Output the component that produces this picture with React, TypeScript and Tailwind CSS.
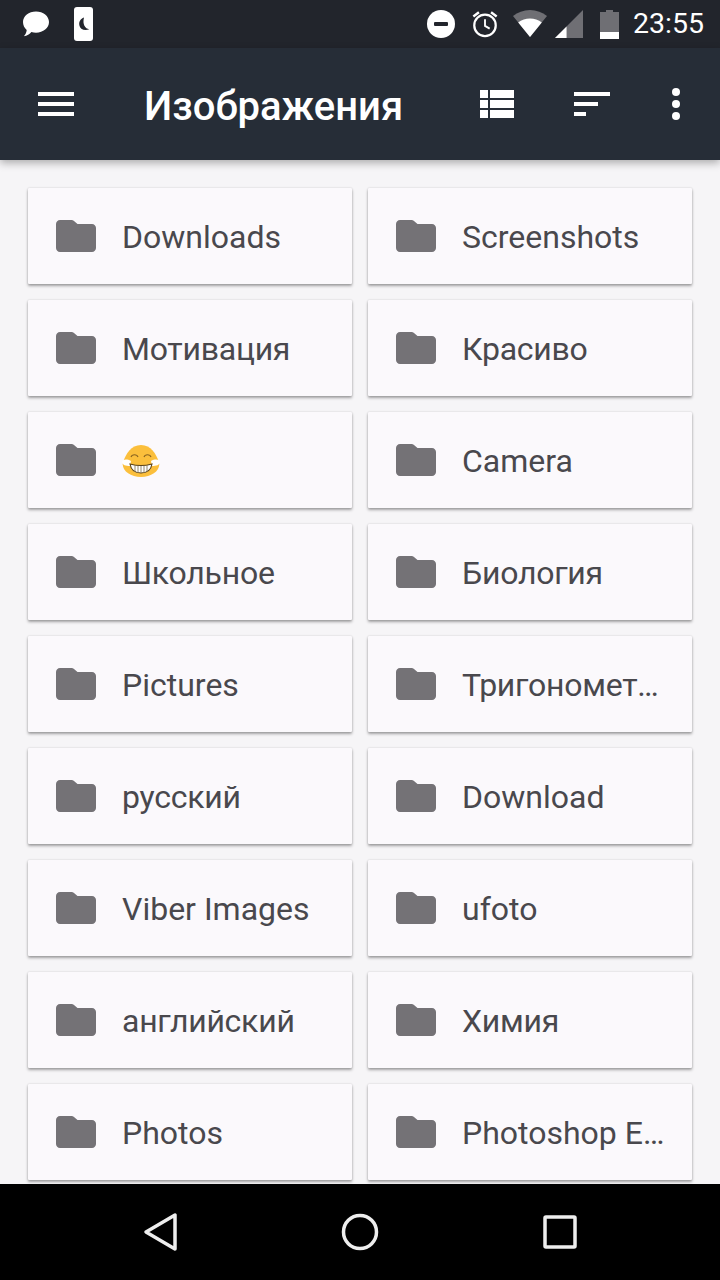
const folders = [
  "Downloads", "Screenshots",
  "Мотивация", "Красиво",
  "😁", "Camera",
  "Школьное", "Биология",
  "Pictures", "Тригономет…",
  "русский", "Download",
  "Viber Images", "ufoto",
  "английский", "Химия",
  "Photos", "Photoshop E…",
];

function FolderIcon() {
  return (
    <svg width="40" height="32" viewBox="0 0 40 32" className="shrink-0">
      <path d="M4 0h11.500c1 0 1.800.4 2.500 1.100L21.500 4H36c2.200 0 4 1.800 4 4v20c0 2.200-1.800 4-4 4H4c-2.200 0-4-1.800-4-4V4c0-2.200 1.800-4 4-4z" fill="#747276" />
    </svg>
  );
}

function GrinEmoji() {
  return (
    <svg width="38" height="32" viewBox="0 0 38 32" className="block">
      <path d="M19 0c10 0 15 9 18 17 2 8-7 15-18 15S-1 25 1 17C4 9 9 0 19 0z" fill="#fbbf3c" />
      <path d="M0 17c1-3 5-3 9-1l-1 5c-4 0-8-1-8-4zM38 17c-1-3-5-3-9-1l1 5c4 0 8-1 8-4z" fill="#fff" />
      <path d="M9 12c1-3 6-3 7 0M22 12c1-3 6-3 7 0" fill="none" stroke="#8a6420" strokeWidth="1.100" />
      <path d="M8 19c7 2 15 2 22 0-1 6-5 9-11 9S9 25 8 19z" fill="#fff" stroke="#5a4218" strokeWidth="1.100" />
      <path d="M13 20v7M16 21v7M19 21v7M22 21v7M25 20v7" stroke="#8a7a5a" strokeWidth="0.900" />
    </svg>
  );
}

function FolderCard({ name }: { name: string }) {
  const isCyrillic = /[а-яё]/i.test(name);
  return (
    <div className="flex h-24 min-w-0 items-center rounded-[1px] bg-[#fbf9fc] pl-7 shadow-[0_2px_3px_rgba(0,0,0,0.34),0_0_2px_rgba(0,0,0,0.16)]">
      <FolderIcon />
      <div className={`ml-[26px] min-w-0 translate-y-px whitespace-nowrap text-[32px] leading-10 text-[#49484d] ${isCyrillic ? "tracking-[-0.25px]" : ""}`}>
        {name === "😁" ? <GrinEmoji /> : name}
      </div>
    </div>
  );
}

function StatusBar() {
  return (
    <div className="flex h-12 shrink-0 items-center bg-[#22252c] pl-[22px] pr-4 text-white">
      <svg width="28" height="28" viewBox="0 0 28 28">
        <path d="M14 1.500c7.200 0 13 4.600 13 10.600 0 6-5.800 10.600-13 10.600-1.600 0-3.200-.2-4.600-.7C7.800 24 5 26 1.800 26.300 3.400 24.600 4.500 22.600 4.700 20 2.400 18 1 15.300 1 12.100 1 6.100 6.800 1.500 14 1.500z" fill="#fff" />
      </svg>
      <div className="ml-6 flex h-[34px] w-[19px] items-center justify-center rounded-[3px] bg-white">
        <svg width="14" height="14" viewBox="0 0 12 12">
          <path d="M6 0.500C3 1.500 1.500 4 2 7c.6 3 3.600 5 8.500 3.600C7 10 4.500 6.500 6 0.500z" fill="#22252c" />
        </svg>
      </div>
      <div className="ml-auto flex items-center">
        <svg width="28" height="28" viewBox="0 0 28 28">
          <circle cx="14" cy="14" r="14" fill="#fff" />
          <rect x="7" y="12" width="14" height="4" rx="1" fill="#22252c" />
        </svg>
        <svg className="ml-[16px]" width="28" height="28" viewBox="0 0 30 30" fill="none" stroke="#fff">
          <circle cx="15" cy="16.500" r="11.500" strokeWidth="2.400" />
          <path d="M15 10v7l5 3" strokeWidth="2" />
          <path d="M2.500 7l6-4.500M27.500 7l-6-4.500" strokeWidth="2.600" />
        </svg>
        <svg className="ml-[14px]" width="34" height="28" viewBox="0 0 36 28" preserveAspectRatio="none">
          <path d="M18 27L0 6C5 2.500 11 0 18 0s13 2.500 18 6z" fill="#6f6f74" />
          <path d="M18 27L5.500 12.500C9 10 13.500 8.500 18 8.500s9 1.500 12.500 4z" fill="#fff" />
        </svg>
        <svg className="ml-[8px]" width="28" height="28" viewBox="0 0 29 29">
          <path d="M29 0v29H0z" fill="#6f6f74" />
          <path d="M12 17v12H0z" fill="#fff" />
        </svg>
        <svg className="ml-[17px]" width="19" height="29" viewBox="0 0 19 29">
          <path d="M6 0h7v2h6v27H0V2h6z" fill="#6f6f74" />
          <rect x="0" y="22" width="19" height="7" fill="#fff" />
        </svg>
        <span className="ml-[14px] text-[28.500px] leading-none">23:55</span>
      </div>
    </div>
  );
}

function Toolbar() {
  return (
    <div className="relative z-10 flex h-28 shrink-0 items-center bg-[#262d37] text-white shadow-[0_3px_8px_rgba(0,0,0,0.3)]">
      <svg className="ml-[38px]" width="36" height="24" viewBox="0 0 36 24" fill="#fff">
        <rect width="36" height="4" />
        <rect y="10" width="36" height="4" />
        <rect y="20" width="36" height="4" />
      </svg>
      <h1 className="ml-[70px] translate-y-[3px] text-[40px] font-medium leading-none">Изображения</h1>
      <svg className="ml-auto" width="34" height="28" viewBox="0 0 34 28" fill="#fff">
        <rect width="8" height="8" />
        <rect x="10" width="24" height="8" />
        <rect y="10" width="8" height="8" />
        <rect x="10" y="10" width="24" height="8" />
        <rect y="20" width="8" height="8" />
        <rect x="10" y="20" width="24" height="8" />
      </svg>
      <svg className="ml-[60px]" width="36" height="24" viewBox="0 0 36 24" fill="#fff">
        <rect width="36" height="4" />
        <rect y="10" width="24" height="4" />
        <rect y="20" width="12" height="4" />
      </svg>
      <svg className="ml-[60px] mr-[38px]" width="12" height="32" viewBox="0 0 12 32" fill="#fff">
        <circle cx="6" cy="4" r="4" />
        <circle cx="6" cy="16" r="4" />
        <circle cx="6" cy="28" r="4" />
      </svg>
    </div>
  );
}

function NavBar() {
  return (
    <div className="relative z-10 flex h-24 shrink-0 items-center bg-black">
      <svg className="ml-[142px]" width="36" height="40" viewBox="0 0 36 40" fill="none" stroke="#eeeeee" strokeWidth="3.500" strokeLinejoin="round">
        <path d="M33 3v34L4 20z" />
      </svg>
      <svg className="ml-[163px]" width="38" height="38" viewBox="0 0 38 38" fill="none" stroke="#eeeeee" strokeWidth="3.500">
        <circle cx="19" cy="19" r="16.500" />
      </svg>
      <svg className="ml-[164px]" width="34" height="34" viewBox="0 0 34 34" fill="none" stroke="#eeeeee" strokeWidth="3.500" strokeLinejoin="round">
        <rect x="2" y="2" width="30" height="30" rx="1" />
      </svg>
    </div>
  );
}

export default function App() {
  return (
    <div className="flex h-screen w-[720px] flex-col overflow-hidden bg-[#f6f5f7] font-['Roboto',sans-serif]">
      <StatusBar />
      <Toolbar />
      <div className="min-h-0 flex-1 overflow-hidden px-7 pt-7">
        <div className="grid grid-cols-2 gap-4">
          {folders.map((name) => (
            <FolderCard key={name} name={name} />
          ))}
        </div>
      </div>
      <NavBar />
    </div>
  );
}
